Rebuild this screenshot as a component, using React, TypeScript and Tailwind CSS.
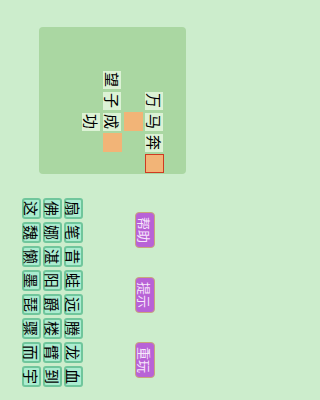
import React from "react";

const cjk = "font-['Noto_Sans_CJK_SC','Noto_Sans_CJK_JP',sans-serif]";

type Cell = { ch?: string; blank?: boolean; selected?: boolean } | null;

const board: Cell[][] = [
  [null, null, null, null, null, null, null],
  [null, null, null, { ch: "万" }, { ch: "马" }, { ch: "奔" }, { blank: true, selected: true }],
  [null, null, null, null, { blank: true }, null, null],
  [null, null, { ch: "望" }, { ch: "子" }, { ch: "成" }, { blank: true }, null],
  [null, null, null, null, { ch: "功" }, null, null],
  [null, null, null, null, null, null, null],
  [null, null, null, null, null, null, null],
];

const tiles = [
  ["扇", "笔", "昔", "蛙", "远", "腾", "龙", "血"],
  ["佛", "娜", "湛", "阳", "爵", "楼", "臂", "到"],
  ["这", "魏", "懒", "墨", "琵", "骤", "而", "宇"],
];

const buttons = ["帮助", "提示", "重玩"];

function BoardCell({ cell }: { cell: Cell }) {
  if (!cell) return <div className="w-[21px] h-[21px]" />;
  if (cell.blank) {
    return (
      <div className="w-[21px] h-[21px] flex items-center justify-center">
        <div
          className={
            cell.selected
              ? "w-[19px] h-[19px] bg-[#f2b477] border border-[#cf3a22]"
              : "w-[19px] h-[19px] bg-[#f2b477]"
          }
        />
      </div>
    );
  }
  return (
    <div className="w-[21px] h-[21px] flex items-center justify-center">
      <div className={`w-[18px] h-[18px] bg-[#dcf2d5] flex items-center justify-center text-[15px] leading-none text-black ${cjk}`}>
        {cell.ch}
      </div>
    </div>
  );
}

export default function App() {
  return (
    <div className="w-screen h-screen min-h-[400px] overflow-hidden bg-[#ccedcc]">
      <div className="w-[225px] h-[400px] overflow-hidden bg-[#ccedcc]">
        <div className="w-[400px] h-[225px] origin-top-left rotate-90 translate-x-[225px] bg-[#ccedcc] flex">
          <div className="ml-[27px] mt-[39px] w-[147px] h-[147px] rounded-[4px] bg-[#aad7a2] flex flex-col">
            {board.map((row, r) => (
              <div key={r} className="flex">
                {row.map((cell, c) => (
                  <BoardCell key={c} cell={cell} />
                ))}
              </div>
            ))}
          </div>
          <div className="ml-[24px] mt-[70px] flex flex-col">
            <div className="ml-[14px] flex gap-[29px]">
              {buttons.map((b) => (
                <div
                  key={b}
                  className={`w-[36px] h-[20px] rounded-[4px] border border-[#c9a57c] bg-[#b862d6] flex items-center justify-center text-[13px] leading-none text-[#f6e6fb] ${cjk}`}
                >
                  {b}
                </div>
              ))}
            </div>
            <div className="mt-[52px] grid grid-cols-8 gap-x-[3px] gap-y-[2px] w-fit">
              {tiles.flat().map((t, i) => (
                <div
                  key={i}
                  className={`w-[21px] h-[19px] rounded-[3px] border-2 border-[#70c69c] bg-[#abecd0] flex items-center justify-center text-[15px] leading-none text-black ${cjk}`}
                >
                  {t}
                </div>
              ))}
            </div>
          </div>
        </div>
      </div>
    </div>
  );
}
